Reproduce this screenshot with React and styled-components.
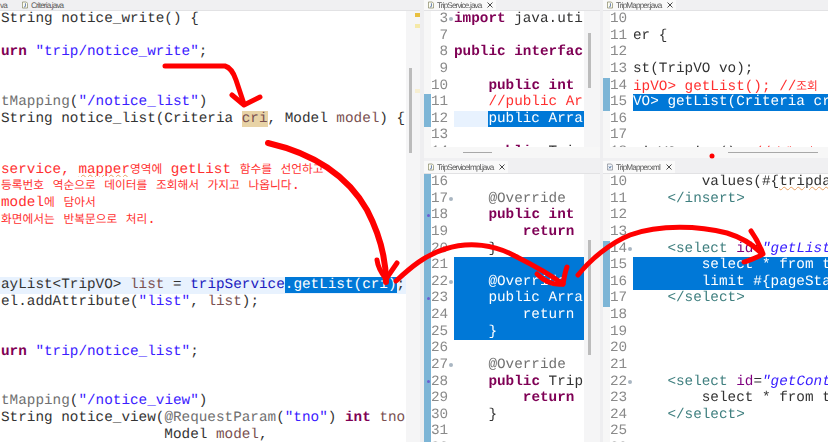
import styled, { createGlobalStyle } from "styled-components"

const LINE = 16.64

const GlobalStyle = createGlobalStyle`
    html, body {
        margin: 0;
        padding: 0;
        background: #f0f0f2;
    }
`;

const Page = styled.div`
    position: relative;
    width: 828px;
    height: 442px;
    display: flex;
    overflow: hidden;
    background: #eeeef0;
    font-family: "Liberation Mono", monospace;
    font-size: 14.33px;
    text-rendering: geometricPrecision;
`;

const Blurred = styled.div`
    display: flex;
    width: 100%;
    height: 100%;
    filter: blur(0.4px);
`;

const Columns = styled.div`
    flex: 1;
    display: grid;
    grid-template-columns: 176px 225px;
    grid-template-rows: 158px 284px;
    column-gap: 3px;
    margin-left: 4px;
`;

const Pane = styled.section`
    display: flex;
    flex-direction: column;
    width: ${(p) => p.$width || "auto"};
    min-width: 0;
    overflow: hidden;
`;

const TabBar = styled.div`
    flex: none;
    height: ${(p) => p.$height}px;
    display: flex;
    align-items: ${(p) => (p.$low ? "flex-end" : "flex-start")};
    background: #f0f0f2;
    border-bottom: 1px solid #e2e2e4;
    box-sizing: border-box;
`;

const Tab = styled.div`
    height: ${(p) => (p.$low ? "12px" : "10px")};
    display: flex;
    align-items: center;
    gap: 3px;
    padding: 0 ${(p) => p.$end ?? 3}px 0 ${(p) => p.$pad ?? 4}px;
    background: ${(p) => (p.$active ? "#f9f9f9" : "transparent")};
    font-family: "Liberation Sans", sans-serif;
    font-size: 8.2px;
    letter-spacing: -0.87px;
    color: #5b5b5b;
    white-space: nowrap;
`;

const TabIcon = styled.svg`
    width: 6px;
    height: 8px;
    flex: none;
`;

const CloseIcon = styled.svg`
    width: 6px;
    height: 6px;
    margin-left: 3px;
    flex: none;
`;

const Body = styled.div`
    flex: 1;
    min-height: 0;
    display: flex;
    background: #fff;
`;

const Lines = styled.div`
    flex: 1;
    min-width: 0;
    overflow: hidden;
`;

const Row = styled.div`
    height: ${LINE}px;
    line-height: ${LINE}px;
    display: flex;
    background: ${(p) => (p.$current ? "#e8f2fe" : "transparent")};
`;

const Mark = styled.div`
    flex: none;
    width: 7px;
    background: ${(p) => (p.$changed ? "#7db5d6" : "#f7f7f7")};
    display: flex;
    align-items: center;
`;

const Override = styled.div`
    width: 3px;
    height: 3px;
    border-radius: 50%;
    background: #6a5fd0;
    margin-left: 3px;
`;

const Num = styled.div`
    flex: none;
    width: 17.2px;
    text-align: right;
    color: #8a8a8a;
    white-space: pre;
`;

const Fold = styled.div`
    flex: none;
    width: 5.8px;
    display: flex;
    align-items: center;
    justify-content: center;
`;

const FoldDot = styled.div`
    width: 4px;
    height: 4px;
    border-radius: 50%;
    background: #a9b6c2;
`;

const Code = styled.div`
    flex: 1;
    min-width: 0;
    overflow: hidden;
    white-space: pre;
    padding-left: ${(p) => p.$pad || 0}px;
    color: ${(p) => (p.$note ? "#ff3030" : "#333")};
    background: ${(p) => (p.$selected ? "#0078d7" : "transparent")};
`;

const PartialCode = styled(Code)`
    background: linear-gradient(to right, #e8f2fe 34.4px, #0078d7 34.4px);
    padding-left: 34.4px;
`;

const colors = {
    key: "#7f0055",
    str: "#3a20ff",
    ann: "#707070",
    note: "#ff3030",
    field: "#2020c0",
    vari: "#7a5050",
    tag: "#3f7f7f",
    attr: "#7f007f",
    sel: "#ffffff",
};

const Tok = styled.span`
    color: ${(p) => colors[p.$kind] || "inherit"};
    font-weight: ${(p) => (p.$kind === "key" ? 700 : 400)};
    font-style: ${(p) => (p.$italic ? "italic" : "normal")};
    background: ${(p) => p.$bg || "transparent"};
    text-decoration: ${(p) => (p.$wavy ? "underline wavy #e8a060 1px" : "none")};
`;

const Hangul = styled.span`
    font-family: "Noto Sans CJK KR", sans-serif;
    font-size: 11.7px;
    color: ${(p) => (p.$note ? "#ff3030" : "inherit")};
`;

const Rail = styled.div`
    flex: none;
    width: ${(p) => p.$width}px;
    display: flex;
    background: #f5f5f6;
    padding-top: ${(p) => p.$top}px;
    box-sizing: border-box;
`;

const Track = styled.div`
    flex: none;
    width: ${(p) => p.$width}px;
    display: flex;
    flex-direction: column;
    padding-top: ${(p) => p.$top || 0}px;
`;

const Thumb = styled.div`
    width: 3px;
    height: ${(p) => p.$height}px;
    margin-left: ${(p) => p.$left}px;
    background: #bcbcbc;
    flex: none;
`;

const RulerMark = styled.div`
    width: 5px;
    height: 4px;
    margin-top: ${(p) => p.$gap}px;
    background: ${(p) => p.$color};
    flex: none;
`;

const HScroll = styled.div`
    flex: none;
    height: 11px;
    display: flex;
    align-items: center;
    background: #f7f7f7;
    padding-left: ${(p) => p.$left}px;
`;

const HThumb = styled.div`
    width: ${(p) => p.$width}px;
    height: 1px;
    background: #a8a8a8;
`;

const Overlay = styled.svg`
    position: absolute;
    left: 0;
    top: 0;
    width: 828px;
    height: 442px;
    pointer-events: none;
`;

const t = (kind, text, extra) => ({ kind, text, ...extra });
const kor = (text, note) => ({ ko: true, text, note });
const plain = (text) => t("", text);
const key = (text) => t("key", text);

const leftLines = [
    { toks: [plain("String notice_write() {")] },
    {},
    { toks: [key("urn"), plain(" "), t("str", '"trip/notice_write"'), plain(";")] },
    {},
    {},
    { toks: [t("ann", "tMapping"), plain("("), t("str", '"/notice_list"'), plain(")")] },
    { toks: [plain("String notice_list(Criteria "), t("vari", "cri", { bg: "#e8d3a6" }), plain(", Model "), t("vari", "model"), plain(") {")] },
    {},
    {},
    { note: true, toks: [plain("service, "), t("note", "mapper", { wavy: true }), kor("영역에"), plain(" getList "), kor("함수를"), plain(" "), kor("선언하고")] },
    { note: true, toks: [kor("등록번호"), plain(" "), kor("역순으로"), plain(" "), kor("데이터를"), plain(" "), kor("조회해서"), plain(" "), kor("가지고"), plain(" "), kor("나옵니다"), plain(".")] },
    { note: true, toks: [plain("model"), kor("에"), plain(" "), kor("담아서")] },
    { note: true, toks: [kor("화면에서는"), plain(" "), kor("반복문으로"), plain(" "), kor("처리"), plain(".")] },
    {},
    {},
    {},
    { current: true, toks: [plain("ayList<TripVO> "), t("vari", "list"), plain(" = "), t("field", "tripService"), t("sel", ".getList(cri)", { bg: "#0078d7" }), plain(";")] },
    { toks: [plain("el.addAttribute("), t("str", '"list"'), plain(", "), t("vari", "list"), plain(");")] },
    {},
    {},
    { toks: [key("urn"), plain(" "), t("str", '"trip/notice_list"'), plain(";")] },
    {},
    {},
    { toks: [t("ann", "tMapping"), plain("("), t("str", '"/notice_view"'), plain(")")] },
    { toks: [plain("String notice_view("), t("ann", "@RequestParam"), plain("("), t("str", '"tno"'), plain(") "), key("int"), plain(" "), t("vari", "tno")] },
    { toks: [plain("                   Model "), t("vari", "model"), plain(",")] },
];

const serviceLines = [
    { n: 3, fold: true, toks: [key("import"), plain(" java.uti")] },
    { n: 7 },
    { n: 8, toks: [key("public"), plain(" "), key("interfac")] },
    { n: 9 },
    { n: 10, toks: [plain("    "), key("public"), plain(" "), key("int")] },
    { n: 11, changed: true, toks: [t("note", "    //public Ar")] },
    { n: 12, changed: true, partial: 4, toks: [t("sel", "public Arra")] },
    { n: 13 },
    { n: 14, toks: [plain("    "), key("public"), plain(" Trip")] },
];

const implLines = [
    { n: 16 },
    { n: 17, fold: true, toks: [t("ann", "    @Override")] },
    { n: 18, over: true, toks: [plain("    "), key("public"), plain(" "), key("int")] },
    { n: 19, toks: [plain("        "), key("return")] },
    { n: 20, toks: [plain("    }")] },
    { n: 21, selected: true },
    { n: 22, fold: true, selected: true, toks: [t("sel", "    @Override")] },
    { n: 23, over: true, selected: true, toks: [t("sel", "    public Arra")] },
    { n: 24, selected: true, toks: [t("sel", "        return")] },
    { n: 25, selected: true, toks: [t("sel", "    }")] },
    { n: 26 },
    { n: 27, fold: true, toks: [t("ann", "    @Override")] },
    { n: 28, over: true, toks: [plain("    "), key("public"), plain(" Trip")] },
    { n: 29, toks: [plain("        "), key("return")] },
    { n: 30, toks: [plain("    }")] },
    { n: 31 },
    { n: 32 },
];

const mapperLines = [
    { n: 10 },
    { n: 11, toks: [plain("er {")] },
    { n: 12 },
    { n: 13, toks: [plain("st(TripVO vo);")] },
    { n: 14, changed: true, toks: [t("note", "ipVO> getList(); //"), kor("조회", true)] },
    { n: 15, changed: true, selected: true, toks: [t("sel", "VO> getList(Criteria cr")] },
    { n: 16 },
    { n: 17 },
    { n: 18, toks: [plain(" ipVO view(); "), t("note", "//"), kor("상세보기", true)] },
];

const xmlLines = [
    { n: 10, toks: [plain("        values(#{"), t("", "tripda", { wavy: true })] },
    { n: 11, toks: [t("tag", "    </insert>")] },
    { n: 12 },
    { n: 13 },
    { n: 14, changed: true, fold: true, toks: [t("tag", "    <select "), t("attr", "id"), plain("="), t("str", '"getList', { italic: true })] },
    { n: 15, changed: true, selected: true, toks: [t("sel", "        select * from t")] },
    { n: 16, changed: true, selected: true, toks: [t("sel", "        limit #{pageSta")] },
    { n: 17, changed: true, toks: [t("tag", "    </select>")] },
    { n: 18 },
    { n: 19 },
    { n: 20 },
    { n: 21 },
    { n: 22, fold: true, toks: [t("tag", "    <select "), t("attr", "id"), plain("="), t("str", '"getCont', { italic: true })] },
    { n: 23, toks: [plain("        select * from t")] },
    { n: 24, toks: [t("tag", "    </select>")] },
    { n: 25 },
    { n: 26 },
];

const Tokens = ({ toks = [] }) =>
    toks.map((tok, i) =>
        tok.ko ? (
            <Hangul key={i} $note={tok.note}>{tok.text}</Hangul>
        ) : (
            <Tok key={i} $kind={tok.kind} $bg={tok.bg} $wavy={tok.wavy} $italic={tok.italic}>
                {tok.text}
            </Tok>
        )
    );

const Gutter = ({ line, allChanged }) => (
    <>
        <Mark $changed={line.changed || allChanged}>{line.over && <Override />}</Mark>
        <Num>{line.n}</Num>
        <Fold>{line.fold && <FoldDot />}</Fold>
    </>
);

const Editor = ({ lines, allChanged }) => (
    <Lines>
        {lines.map((line) => (
            <Row key={line.n}>
                <Gutter line={line} allChanged={allChanged} />
                {line.partial ? (
                    <PartialCode>
                        <Tokens toks={line.toks} />
                    </PartialCode>
                ) : (
                    <Code $selected={line.selected}>
                        <Tokens toks={line.toks} />
                    </Code>
                )}
            </Row>
        ))}
    </Lines>
);

const JavaIcon = () => (
    <TabIcon viewBox="0 0 7 8">
        <path d="M0.5 0.5h4.5l1.5 1.5v5.5h-6z" fill="#fdfdf2" stroke="#7d7d5a" strokeWidth="0.8" />
        <path d="M4 2v3.4q0 1-1.5 .8" fill="none" stroke="#3b5a9a" strokeWidth="0.9" />
    </TabIcon>
);

const XmlIcon = () => (
    <TabIcon viewBox="0 0 7 8">
        <path d="M0.5 0.5h4.5l1.5 1.5v5.5h-6z" fill="#f4f6fa" stroke="#7a7f8a" strokeWidth="0.8" />
        <path d="M2 3l1.5 2.5L5 3M2 5.5L5 3" fill="none" stroke="#4a6f9a" strokeWidth="0.7" />
    </TabIcon>
);

const Close = () => (
    <CloseIcon viewBox="0 0 6 6">
        <path d="M0.5 0.5L5.5 5.5M5.5 0.5L0.5 5.5" fill="none" stroke="#4a4a4a" strokeWidth="1" />
    </CloseIcon>
);

const App = () => {
    return (
        <Page>
            <GlobalStyle />
            <Blurred>
                <Pane $width="420px">
                    <TabBar $height={11}>
                        <Tab $pad={0} $end={8}>va</Tab>
                        <Tab $pad={7}>
                            <JavaIcon />
                            Criteria.java
                        </Tab>
                    </TabBar>
                    <Body>
                        <Lines>
                            {leftLines.map((line, i) => (
                                <Row key={i} $current={line.current}>
                                    <Code $pad={1} $note={line.note}>
                                        <Tokens toks={line.toks} />
                                    </Code>
                                </Row>
                            ))}
                        </Lines>
                        <Rail $width={14} $top={2}>
                            <Track $width={9} $top={55}>
                                <Thumb $left={3} $height={85} />
                            </Track>
                            <Track $width={5}>
                                <RulerMark $gap={0} $color="#e8c040" />
                                <RulerMark $gap={7} $color="#f5e9a8" />
                                <RulerMark $gap={61} $color="#f7efd2" />
                            </Track>
                        </Rail>
                    </Body>
                </Pane>
                <Columns>
                    <Pane>
                        <TabBar $height={11}>
                            <Tab $active>
                                <JavaIcon />
                                TripService.java
                                <Close />
                            </Tab>
                        </TabBar>
                        <Body>
                            <Editor lines={serviceLines} />
                            <Rail $width={16} $top={22}>
                                <Thumb $left={4} $height={55} />
                            </Rail>
                        </Body>
                        <HScroll $left={39}>
                            <HThumb $width={29} />
                        </HScroll>
                    </Pane>
                    <Pane>
                        <TabBar $height={11}>
                            <Tab $active>
                                <JavaIcon />
                                TripMapper.java
                                <Close />
                            </Tab>
                        </TabBar>
                        <Body>
                            <Editor lines={mapperLines} />
                        </Body>
                        <HScroll $left={125}>
                            <HThumb $width={90} />
                        </HScroll>
                    </Pane>
                    <Pane>
                        <TabBar $height={16} $low>
                            <Tab $active $low>
                                <JavaIcon />
                                TripServiceImpl.java
                                <Close />
                            </Tab>
                        </TabBar>
                        <Body>
                            <Editor lines={implLines} allChanged />
                            <Rail $width={16} $top={66}>
                                <Thumb $left={4} $height={115} />
                            </Rail>
                        </Body>
                    </Pane>
                    <Pane>
                        <TabBar $height={16} $low>
                            <Tab $active $low>
                                <XmlIcon />
                                TripMapper.xml
                                <Close />
                            </Tab>
                        </TabBar>
                        <Body>
                            <Editor lines={xmlLines} />
                        </Body>
                    </Pane>
                </Columns>
            </Blurred>
            <Overlay viewBox="0 0 828 442" fill="none" stroke="#ff0000" strokeWidth="5" strokeLinecap="round" strokeLinejoin="round">
                <path d="M165 66 L225 66 Q232 68 236 80 L244 104" />
                <path d="M232 95 L244 105 L260 97" />
                <path d="M268 143 C320 155 350 180 367 210 C380 235 386 260 386 282" strokeWidth="6" />
                <path d="M377 260 C378 268 382 274 386 279 L397 263" />
                <path d="M396 281 C410 268 425 255 445 249 C470 241 495 245 515 256 C535 266 552 276 563 284" />
                <path d="M537 274 C545 282 555 285 563 284 C564 278 565 272 567 267" />
                <path d="M578 275 C590 260 610 243 630 235 C660 224 700 226 727 233 C740 237 752 244 760 252" />
                <path d="M751 231 C756 238 760 246 763 254 C757 258 750 260 744 262" />
                <circle cx="712" cy="156" r="2.5" fill="#ff0000" stroke="none" />
            </Overlay>
        </Page>
    )
}

export default App
